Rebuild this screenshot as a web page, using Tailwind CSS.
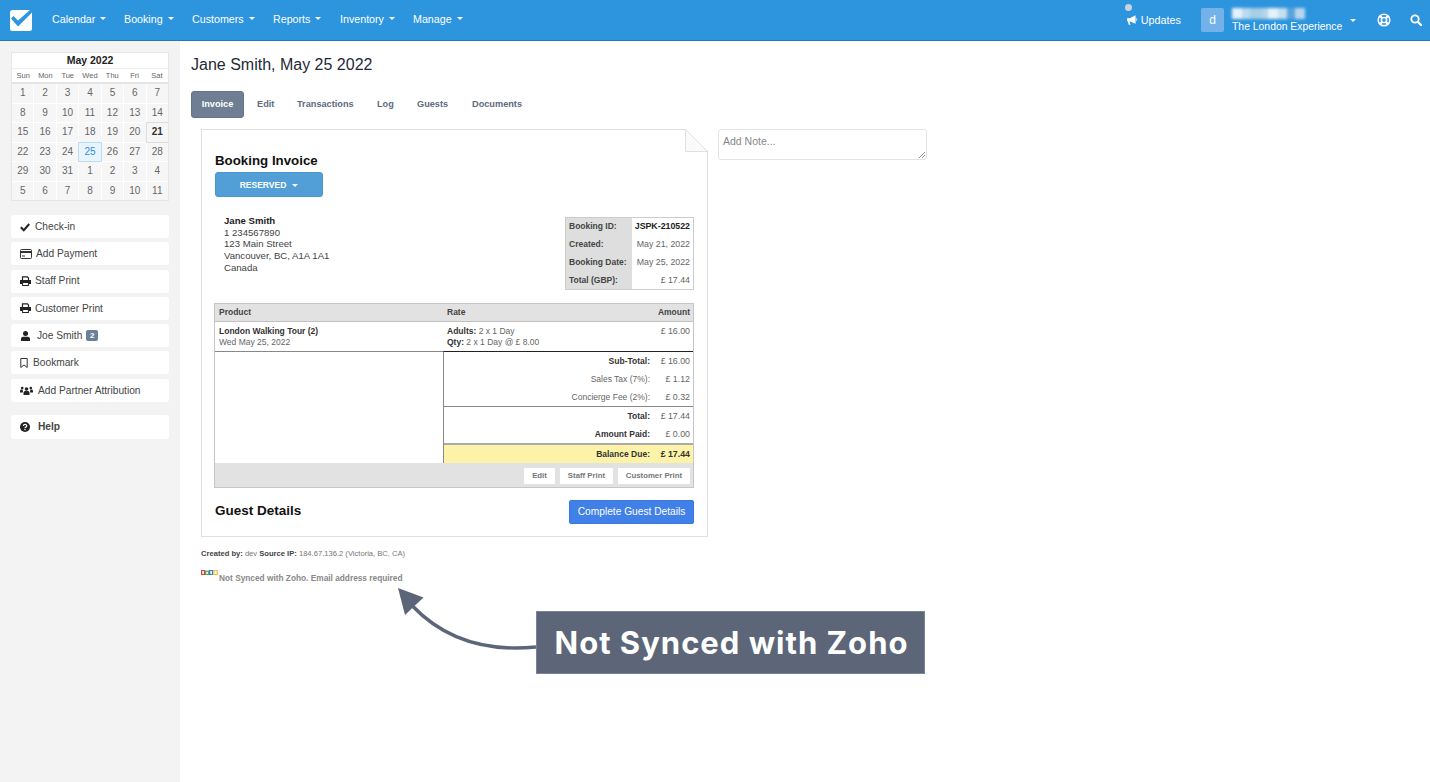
<!DOCTYPE html>
<html lang="en">
<head>
<meta charset="utf-8">
<title>Booking Invoice</title>
<script src="https://cdn.jsdelivr.net/npm/@tailwindcss/browser@4"></script>
</head>
<body class="relative h-[782px] w-[1430px] overflow-hidden bg-white font-['Liberation_Sans',Arial,sans-serif] text-[#333]">

<header class="flex h-[41px] items-center border-b border-[#2277b8] bg-[#2d94de] text-white">
  <svg class="ml-[9px] h-[24px] w-[24px]" viewBox="0 0 24 24"><rect x="1" y="2" width="22" height="21" rx="2.5" fill="#fff"/><path d="M2 10.500l2.500-2.500 4.500 4.500L21 2h2v2.500L9 18.500z" fill="#2d94de"/></svg>
  <nav class="ml-[19px] flex pb-[2px] text-[10.700px] leading-none">
    <a class="flex w-[72px] items-center">Calendar<i class="ml-[5px] h-0 w-0 border-x-[3px] border-t-[3px] border-x-transparent border-t-white"></i></a>
    <a class="flex w-[68px] items-center">Booking<i class="ml-[5px] h-0 w-0 border-x-[3px] border-t-[3px] border-x-transparent border-t-white"></i></a>
    <a class="flex w-[81px] items-center">Customers<i class="ml-[5px] h-0 w-0 border-x-[3px] border-t-[3px] border-x-transparent border-t-white"></i></a>
    <a class="flex w-[67px] items-center">Reports<i class="ml-[5px] h-0 w-0 border-x-[3px] border-t-[3px] border-x-transparent border-t-white"></i></a>
    <a class="flex w-[73px] items-center">Inventory<i class="ml-[5px] h-0 w-0 border-x-[3px] border-t-[3px] border-x-transparent border-t-white"></i></a>
    <a class="flex items-center">Manage<i class="ml-[5px] h-0 w-0 border-x-[3px] border-t-[3px] border-x-transparent border-t-white"></i></a>
  </nav>
  <div class="ml-auto flex items-center">
    <div class="relative flex items-center text-[10.800px]">
      <span class="absolute left-[-2px] top-[-8px] h-[7px] w-[7px] rounded-full bg-[#c9d3db]"></span>
      <svg class="mr-[2px] h-[12px] w-[12px]" viewBox="0 0 14 12" fill="#fff"><path d="M0 4h3l7-3.500v10L3 7.500l1 4H2L1 7.500H0zM11 3.500a2.500 2.500 0 010 4z"/></svg>
      Updates
    </div>
    <div class="ml-[20px] flex h-[24px] w-[23px] items-center justify-center rounded-[2px] bg-[#73b2e8] text-[12px]">d</div>
    <div class="ml-[8px] flex w-[111px] flex-col">
      <div class="flex h-[11px] w-[78px] blur-[1.500px]">
        <span class="h-[11px] w-[10px] bg-[#e6f2fa]"></span><span class="h-[11px] w-[8px] bg-[#b9daf2]"></span><span class="h-[11px] w-[12px] bg-[#a6d0e4]"></span><span class="h-[11px] w-[6px] bg-[#b5d6e6]"></span><span class="h-[11px] w-[10px] bg-[#e6f2fa]"></span><span class="h-[11px] w-[9px] bg-[#c4e0ee]"></span><span class="h-[11px] w-[8px] bg-[#5ba2dc]"></span><span class="h-[11px] w-[10px] bg-[#b8d7ee]"></span>
      </div>
      <div class="mt-[1px] whitespace-nowrap text-[10.400px] leading-[13px]">The London Experience</div>
    </div>
    <i class="ml-[7px] h-0 w-0 border-x-[3px] border-t-[3px] border-x-transparent border-t-white"></i>
    <svg class="ml-[21px] h-[14px] w-[14px]" viewBox="0 0 14 14" fill="none" stroke="#fff"><circle cx="7" cy="7" r="5.800" stroke-width="1.500"/><circle cx="7" cy="7" r="2.600" stroke-width="1.500"/><path d="M3 3l2 2M11 3L9 5M3 11l2-2M11 11L9 9" stroke-width="2"/></svg>
    <svg class="ml-[19px] mr-[8px] h-[12px] w-[12px]" viewBox="0 0 12 12" fill="none" stroke="#fff"><circle cx="5" cy="5" r="3.700" stroke-width="1.800"/><path d="M8 8l3.300 3.300" stroke-width="2.200" stroke-linecap="round"/></svg>
  </div>
</header>

<div class="flex h-[741px]">
  <aside class="w-[180px] shrink-0 bg-[#f3f3f3] px-[11px] pt-[11px]">
    <div class="h-[149px] w-[158px] overflow-hidden border border-[#e6e6e6] bg-white">
      <div class="h-[15px] text-center text-[10.500px] font-bold leading-[15px] text-[#222]">May 2022</div>
      <div class="grid h-[16px] grid-cols-7 border-y border-b-2 border-[#eee] border-b-[#e4e4e4] text-center text-[7.500px] leading-[14px] text-[#666]">
        <span>Sun</span><span>Mon</span><span>Tue</span><span>Wed</span><span>Thu</span><span>Fri</span><span>Sat</span>
      </div>
      <div class="grid grid-cols-7 grid-rows-6 gap-px bg-white text-center text-[10px] leading-[18.600px] text-[#666]">
        <span class="bg-[#f6f6f6]">1</span><span class="bg-[#f6f6f6]">2</span><span class="bg-[#f6f6f6]">3</span><span class="bg-[#f6f6f6]">4</span><span class="bg-[#f6f6f6]">5</span><span class="bg-[#f6f6f6]">6</span><span class="bg-[#f6f6f6]">7</span>
        <span class="bg-[#f6f6f6]">8</span><span class="bg-[#f6f6f6]">9</span><span class="bg-[#f6f6f6]">10</span><span class="bg-[#f6f6f6]">11</span><span class="bg-[#f6f6f6]">12</span><span class="bg-[#f6f6f6]">13</span><span class="bg-[#f6f6f6]">14</span>
        <span class="bg-[#f6f6f6]">15</span><span class="bg-[#f6f6f6]">16</span><span class="bg-[#f6f6f6]">17</span><span class="bg-[#f6f6f6]">18</span><span class="bg-[#f6f6f6]">19</span><span class="bg-[#f6f6f6]">20</span><span class="bg-[#f6f6f6] font-bold text-[#333] outline outline-[#ddd]">21</span>
        <span class="bg-[#f6f6f6]">22</span><span class="bg-[#f6f6f6]">23</span><span class="bg-[#f6f6f6]">24</span><span class="bg-[#e8f4fb] text-[#2d8ee0] outline outline-[#bcdcf0]">25</span><span class="bg-[#f6f6f6]">26</span><span class="bg-[#f6f6f6]">27</span><span class="bg-[#f6f6f6]">28</span>
        <span class="bg-[#f6f6f6]">29</span><span class="bg-[#f6f6f6]">30</span><span class="bg-[#f6f6f6]">31</span><span class="bg-[#f6f6f6]">1</span><span class="bg-[#f6f6f6]">2</span><span class="bg-[#f6f6f6]">3</span><span class="bg-[#f6f6f6]">4</span>
        <span class="bg-[#f6f6f6]">5</span><span class="bg-[#f6f6f6]">6</span><span class="bg-[#f6f6f6]">7</span><span class="bg-[#f6f6f6]">8</span><span class="bg-[#f6f6f6]">9</span><span class="bg-[#f6f6f6]">10</span><span class="bg-[#f6f6f6]">11</span>
      </div>
    </div>

    <div class="mt-[14px] flex flex-col gap-[4.300px] text-[10.200px] text-[#444]">
      <a class="flex h-[23px] items-center rounded-[3px] bg-white pl-[9px]"><svg class="mr-[5px] h-[10px] w-[10px]" viewBox="0 0 10 10" fill="none" stroke="#222" stroke-width="2"><path d="M.8 5.200l3 3L9.200 2"/></svg>Check-in</a>
      <a class="flex h-[23px] items-center rounded-[3px] bg-white pl-[9px]"><svg class="mr-[4px] h-[10px] w-[12px]" viewBox="0 0 12 10"><rect x=".5" y=".5" width="11" height="9" rx="1" fill="none" stroke="#333"/><rect x="1" y="2" width="10" height="2" fill="#333"/><rect x="2" y="6.500" width="3" height="1" fill="#333"/></svg>Add Payment</a>
      <a class="flex h-[23px] items-center rounded-[3px] bg-white pl-[9px]"><svg class="mr-[4px] h-[10px] w-[11px]" viewBox="0 0 11 10"><path d="M2.500 4V.8h5L8.500 2v2" fill="none" stroke="#222" stroke-width="1.200"/><path d="M0 4h11v4H0z" fill="#222"/><rect x="2.600" y="6.500" width="5.800" height="3" fill="#fff" stroke="#222"/></svg>Staff Print</a>
      <a class="flex h-[23px] items-center rounded-[3px] bg-white pl-[9px]"><svg class="mr-[4px] h-[10px] w-[11px]" viewBox="0 0 11 10"><path d="M2.500 4V.8h5L8.500 2v2" fill="none" stroke="#222" stroke-width="1.200"/><path d="M0 4h11v4H0z" fill="#222"/><rect x="2.600" y="6.500" width="5.800" height="3" fill="#fff" stroke="#222"/></svg>Customer Print</a>
      <a class="flex h-[23px] items-center rounded-[3px] bg-white pl-[10px]"><svg class="mr-[7px] h-[10px] w-[9px]" viewBox="0 0 9 10" fill="#222"><circle cx="4.500" cy="2.600" r="2.500"/><path d="M0 10V7.800C0 6.500 1 5.800 2.200 5.800h4.600C8 5.800 9 6.500 9 7.800V10z"/></svg>Joe Smith<span class="ml-[4px] flex h-[11px] w-[12px] items-center justify-center rounded-[2px] bg-[#6c7f9a] text-[8px] font-bold leading-none text-white">2</span></a>
      <a class="flex h-[23px] items-center rounded-[3px] bg-white pl-[9px]"><svg class="mr-[5px] h-[10px] w-[8px]" viewBox="0 0 8 10" fill="none" stroke="#333"><path d="M.8.500h6.400v9L4 7 .8 9.500z"/></svg>Bookmark</a>
      <a class="flex h-[23px] items-center rounded-[3px] bg-white pl-[9px]"><svg class="mr-[5px] h-[9px] w-[13px]" viewBox="0 0 13 9" fill="#222"><circle cx="6.500" cy="3" r="1.800"/><path d="M3.500 9V7c0-1.500 1-2 2-2h2c1 0 2 .5 2 2v2z"/><circle cx="2.200" cy="2" r="1.300"/><circle cx="10.800" cy="2" r="1.300"/><path d="M0 6.500V5c0-1 .8-1.500 1.500-1.500h1.200L3 6.500zM13 6.500V5c0-1-.8-1.500-1.500-1.500h-1.200L10 6.500z"/></svg>Add Partner Attribution</a>
      <a class="mt-[9px] flex h-[24px] items-center rounded-[3px] bg-white pl-[9px] font-bold"><svg class="mr-[8px] h-[10px] w-[10px]" viewBox="0 0 10 10"><circle cx="5" cy="5" r="5" fill="#222"/><path d="M3.400 4c0-2.100 3.300-2.100 3.300-.1 0 1.200-1.700 1.200-1.700 2.400" fill="none" stroke="#fff" stroke-width="1.200"/><rect x="4.400" y="7" width="1.200" height="1.200" fill="#fff"/></svg>Help</a>
    </div>
  </aside>

  <main class="pl-[11px]">
    <h1 class="mt-[14px] text-[16px] font-normal leading-[20px] text-[#1f2937]">Jane Smith, May 25 2022</h1>
    <div class="mt-[16px] flex h-[27px] items-center text-[9.200px] font-bold text-[#5d6b80]">
      <a class="flex h-[27px] w-[53px] items-center justify-center rounded-[3px] border border-[#64748b] bg-[#6f7e92] text-white">Invoice</a>
      <a class="ml-[13px] mt-[1px] w-[40px]">Edit</a>
      <a class="mt-[1px] w-[80px]">Transactions</a>
      <a class="mt-[1px] w-[40px]">Log</a>
      <a class="mt-[1px] w-[55px]">Guests</a>
      <a class="mt-[1px]">Documents</a>
    </div>

    <div class="mt-[11px] flex items-start pl-[10px]">
      <section class="relative h-[408px] w-[507px] border border-[#e0e0e0] bg-white">
        <svg class="absolute right-[-1px] top-[-1px] h-[23px] w-[23px]" viewBox="0 0 23 23"><path d="M0 0l23 23H0z" fill="#fafafa"/><path d="M.5 0v22.500H23M0 0l23 23" fill="none" stroke="#e0e0e0"/><path d="M1 0h22v22z" fill="#fff"/></svg>

        <h2 class="ml-[13px] mt-[23px] text-[13.300px] font-bold leading-[16px] text-[#111]">Booking Invoice</h2>
        <div class="ml-[13px] mt-[3px] flex h-[25px] w-[108px] items-center justify-center rounded-[3px] border border-[#4a97cc] bg-[#519fd6] pt-[2px] text-[8.500px] font-bold text-white">RESERVED<i class="ml-[6px] h-0 w-0 border-x-[3px] border-t-[3px] border-x-transparent border-t-white"></i></div>

        <div class="mt-[20px] flex items-start pl-[13px] pr-[13px]">
          <div class="ml-[9px] mt-[-2px] text-[9.600px] leading-[11.700px] text-[#444]">
            <div class="font-bold text-[#222]">Jane Smith</div>
            <div>1 234567890</div>
            <div>123 Main Street</div>
            <div>Vancouver, BC, A1A 1A1</div>
            <div>Canada</div>
          </div>
          <div class="ml-auto grid h-[73px] w-[129px] grid-cols-[66px_1fr] border border-[#ccc] text-[8.500px] leading-[18px]">
            <div class="bg-[#dedede] pl-[3px] font-bold text-[#444]"><div class="-mt-px">Booking ID:</div><div>Created:</div><div>Booking Date:</div><div>Total (GBP):</div></div>
            <div class="pr-[3px] text-right text-[8.800px] text-[#666]"><div class="-mt-px font-bold text-[#222]">JSPK-210522</div><div>May 21, 2022</div><div>May 25, 2022</div><div>£ 17.44</div></div>
          </div>
        </div>

        <div class="ml-[12px] mt-[13px] h-[185px] w-[480px] border border-[#c6c6c6] text-[8.500px] text-[#666]">
          <div class="flex h-[18px] items-center justify-between border-b border-[#c0c0c0] bg-[#e2e2e2] pl-[4px] pr-[3px] font-bold text-[#444]">
            <div class="flex"><span class="w-[228px]">Product</span><span>Rate</span></div><span>Amount</span>
          </div>
          <div class="flex h-[29px] pt-[4px] pl-[4px] pr-[3px] leading-[10.500px]">
            <div class="w-[228px]"><div class="font-bold text-[#333]">London Walking Tour (2)</div><div>Wed May 25, 2022</div></div>
            <div><div><b class="text-[#333]">Adults:</b> 2 x 1 Day</div><div><b class="text-[#333]">Qty:</b> 2 x 1 Day @ £ 8.00</div></div>
            <div class="ml-auto text-[8.800px]">£ 16.00</div>
          </div>
          <div class="flex h-[112px]">
            <div class="w-[228px] border-t border-[#888]"></div>
            <div class="flex-1 border-l border-t border-l-[#888] border-t-[#222] text-right leading-[18.200px]">
              <div class="h-[55px] border-b border-[#888]">
                <div class="flex justify-end pr-[3px] font-bold text-[#333]"><span>Sub-Total:</span><span class="w-[40px] text-[8.800px] font-normal text-[#666]">£ 16.00</span></div>
                <div class="flex justify-end pr-[3px]"><span>Sales Tax (7%):</span><span class="w-[40px] text-[8.800px]">£ 1.12</span></div>
                <div class="flex justify-end pr-[3px]"><span>Concierge Fee (2%):</span><span class="w-[40px] text-[8.800px]">£ 0.32</span></div>
              </div>
              <div class="h-[36px]">
                <div class="flex justify-end pr-[3px] font-bold text-[#333]"><span>Total:</span><span class="w-[40px] text-[8.800px] font-normal text-[#666]">£ 17.44</span></div>
                <div class="flex justify-end pr-[3px] font-bold text-[#333]"><span>Amount Paid:</span><span class="w-[40px] text-[8.800px] font-normal text-[#666]">£ 0.00</span></div>
              </div>
              <div class="flex h-[20px] justify-end border-t-2 border-[#aaa] bg-[#fdf3a8] pr-[3px] font-bold leading-[18px] text-[#333]"><span>Balance Due:</span><span class="w-[40px] text-[8.800px]">£ 17.44</span></div>
            </div>
          </div>
          <div class="flex h-[24px] items-center justify-end gap-[5px] bg-[#e2e2e2] pr-[3px] text-[7.800px] font-bold text-[#777]">
            <a class="mt-[1px] flex h-[16px] w-[31px] items-center justify-center rounded-[1px] bg-white">Edit</a>
            <a class="mt-[1px] flex h-[16px] w-[53px] items-center justify-center rounded-[1px] bg-white">Staff Print</a>
            <a class="mt-[1px] flex h-[16px] w-[72px] items-center justify-center rounded-[1px] bg-white">Customer Print</a>
          </div>
        </div>

        <div class="ml-[13px] mt-[12px] flex h-[24px] items-center justify-between pr-[13px]">
          <h2 class="mb-[2px] text-[13.500px] font-bold text-[#111]">Guest Details</h2>
          <a class="flex h-[24px] w-[125px] items-center justify-center rounded-[2px] border border-[#3a78dc] bg-[#4080e8] text-[10.200px] text-white">Complete Guest Details</a>
        </div>
      </section>

      <div class="relative ml-[10px] h-[31px] w-[209px] rounded-[3px] border border-[#e4e4e4] bg-white pl-[4px] pt-[4px] text-[10.500px] leading-[14px] text-[#888]">Add Note...
        <svg class="absolute bottom-[1px] right-[1px] h-[6px] w-[6px]" viewBox="0 0 6 6" stroke="#777" stroke-width=".8"><path d="M0 6l6-6M3 6l3-3"/></svg>
      </div>
    </div>

    <div class="ml-[10px] mt-[12px] text-[7.600px] leading-[10px] text-[#777]"><b class="text-[#444]">Created by:</b> dev <b class="text-[#444]">Source IP:</b> 184.67.136.2 (Victoria, BC, CA)</div>
    <div class="ml-[10px] mt-[10px] flex items-start text-[8.300px] font-bold leading-[12px] text-[#888]">
      <svg class="mr-[1px] mt-[1px] h-[5px] w-[17px]" viewBox="0 0 17 5" fill="none" stroke-width="1.200"><rect x=".6" y=".6" width="3" height="3.800" stroke="#e04040"/><rect x="4.600" y="1.200" width="3" height="3.200" stroke="#45b045"/><rect x="8.600" y=".6" width="3" height="3.800" stroke="#4080d0"/><rect x="12.800" y=".6" width="3.400" height="3.800" stroke="#eec040"/></svg>
      <span class="mt-[3px]">Not Synced with Zoho. Email address required</span>
    </div>
  </main>
</div>

<svg class="absolute left-[395px] top-[585px] h-[70px] w-[145px]" viewBox="0 0 145 70">
  <path d="M141 62C100 66 55 60 18 21.500" fill="none" stroke="#5c6678" stroke-width="3.500"/>
  <path d="M3 3L28.500 12.600 10 30z" fill="#5c6678"/>
</svg>
<div class="absolute left-[536px] top-[611px] flex h-[63px] w-[389px] items-center justify-center border border-[#7a8494] bg-[#5c6678] pl-[2px] pt-[2px] font-['Inter',sans-serif] text-[31px] font-bold tracking-[1px] text-white">Not Synced with Zoho</div>

</body>
</html>
